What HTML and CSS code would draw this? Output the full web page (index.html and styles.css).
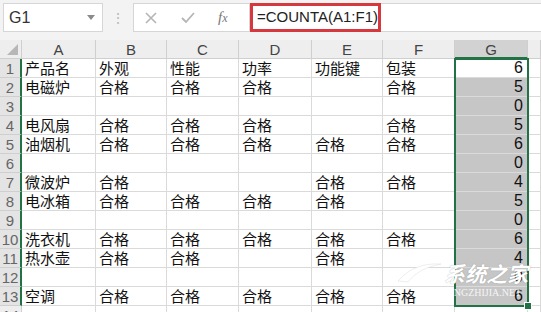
FILE: index.html
```html
<!DOCTYPE html>
<html lang="zh-CN">
<head>
  <meta charset="UTF-8" />
  <title>COUNTA</title>
  <link rel="stylesheet" href="styles.css">
</head>
<body>
  <div class="toolbar">
    <div class="name-box">
      <span>G1</span>
      <span class="caret"></span>
    </div>
    <div class="grip">⋮</div>
    <div class="formula-bar">
      <div class="fx-buttons">
        <svg width="14" height="14" viewBox="0 0 14 14"><path d="M2 2 L12 12 M12 2 L2 12" stroke="#b5b5b5" stroke-width="1.6"/></svg>
        <svg width="16" height="14" viewBox="0 0 16 14"><path d="M2 7 L6 11 L14 2" stroke="#b5b5b5" stroke-width="1.8" fill="none"/></svg>
        <span class="fx">f<i>x</i></span>
      </div>
      <div class="formula">=COUNTA(A1:F1)</div>
    </div>
  </div>

  <div class="sheet" id="sheet">
    <div class="corner"><span class="tri"></span></div>
  </div>

  <div class="watermark">
    <svg class="wm-logo" width="46" height="26" viewBox="0 0 46 26"><path d="M2 22 C13 9 28 4 45 5 C30 8 20 13 12 23 Z" fill="#fff" stroke="#ddd" stroke-width="0.5"/></svg>
    <div class="wm-text">
      <span class="wm-big">系统之家</span>
      <span class="wm-small">XITONGZHIJIA.NET</span>
    </div>
  </div>

  <script>
    const cols = ["A", "B", "C", "D", "E", "F", "G", ""];
    const rows = [
      ["产品名", "外观", "性能", "功率", "功能键", "包装", "6"],
      ["电磁炉", "合格", "合格", "合格", "", "合格", "5"],
      ["", "", "", "", "", "", "0"],
      ["电风扇", "合格", "合格", "合格", "", "合格", "5"],
      ["油烟机", "合格", "合格", "合格", "合格", "合格", "6"],
      ["", "", "", "", "", "", "0"],
      ["微波炉", "合格", "", "", "合格", "合格", "4"],
      ["电冰箱", "合格", "合格", "合格", "合格", "", "5"],
      ["", "", "", "", "", "", "0"],
      ["洗衣机", "合格", "合格", "合格", "合格", "合格", "6"],
      ["热水壶", "合格", "合格", "", "合格", "", "4"],
      ["", "", "", "", "", "", "0"],
      ["空调", "合格", "合格", "合格", "合格", "合格", "6"],
      ["", "", "", "", "", "", ""]
    ];

    const sheet = document.getElementById("sheet");

    cols.forEach(c => {
      const h = document.createElement("div");
      h.className = "col-head" + (c === "G" ? " active" : "");
      h.textContent = c;
      sheet.appendChild(h);
    });

    rows.forEach((r, i) => {
      const rh = document.createElement("div");
      rh.className = "row-head" + (i < 13 ? " active" : "");
      rh.textContent = i + 1;
      sheet.appendChild(rh);

      r.forEach((v, j) => {
        const cell = document.createElement("div");
        cell.className = "cell";
        if (j === 6) {
          cell.className += " num";
          if (i > 0 && i < 13) cell.className += " sel";
        }
        cell.textContent = v;
        sheet.appendChild(cell);
      });
      sheet.appendChild(document.createElement("div")).className = "cell";
    });

    const box = document.createElement("div");
    box.className = "selection";
    box.innerHTML = '<span class="handle"></span>';
    sheet.appendChild(box);
  </script>
</body>
</html>
```

FILE: styles.css
```css
body {
  margin: 0;
  width: 541px;
  height: 312px;
  overflow: hidden;
  background: #fff;
  font-family: "Noto Sans CJK SC", "Liberation Sans", sans-serif;
  position: relative;
}

.toolbar {
  height: 40px;
  background: #f3f3f3;
  display: flex;
  align-items: flex-start;
  padding: 3px 0 0 3px;
  box-sizing: border-box;
}

.name-box {
  flex: 0 0 100px;
  height: 29px;
  box-sizing: border-box;
  background: #fff;
  border: 1px solid #d6d6d6;
  display: flex;
  align-items: center;
  justify-content: space-between;
  padding: 0 7px 0 5px;
  font-family: "Liberation Sans", sans-serif;
  font-size: 16px;
  color: #333;
}

.caret {
  width: 0;
  height: 0;
  border-left: 4px solid transparent;
  border-right: 4px solid transparent;
  border-top: 5px solid #8a8a8a;
}

.grip {
  flex: 0 0 30px;
  text-align: center;
  color: #b8b8b8;
  font-size: 14px;
  line-height: 29px;
}

.formula-bar {
  flex: 1;
  height: 29px;
  display: flex;
  background: #fff;
  border: 1px solid #d6d6d6;
  border-right: none;
  box-sizing: border-box;
}

.fx-buttons {
  flex: 0 0 116px;
  box-sizing: border-box;
  display: flex;
  align-items: center;
  gap: 22px;
  padding-left: 10px;
  border-right: 1px solid #d6d6d6;
}

.fx {
  font-family: "Liberation Serif", serif;
  font-style: italic;
  color: #777;
  font-size: 15px;
}

.fx i {
  font-size: 12px;
}

.formula {
  height: 29px;
  margin-top: -1px;
  box-sizing: border-box;
  width: 131px;
  border: 3px solid #d6393d;
  padding-left: 4px;
  font-family: "Liberation Sans", sans-serif;
  font-size: 15px;
  line-height: 22px;
  color: #222;
}

.sheet {
  position: relative;
  display: grid;
  grid-template-columns: 22px 74px 71px 72px 73px 71px 72px 73px 1fr;
  grid-auto-rows: 19px;
  grid-template-rows: 19px;
}

.corner,
.col-head,
.row-head {
  background: #eeeeee;
  color: #444;
  box-sizing: border-box;
  border-right: 1px solid #cfcfcf;
  border-bottom: 1px solid #cfcfcf;
  font-family: "Liberation Sans", sans-serif;
}

.corner {
  position: relative;
}

.tri {
  position: absolute;
  right: 3px;
  bottom: 3px;
  width: 0;
  height: 0;
  border-left: 11px solid transparent;
  border-bottom: 11px solid #b7b7b7;
}

.col-head {
  text-align: center;
  font-size: 15px;
  line-height: 19px;
}

.col-head.active {
  background: #d2d2d2;
  border-bottom: 2px solid #217346;
}

.row-head {
  text-align: center;
  font-size: 15px;
  line-height: 19px;
  color: #666;
}

.row-head.active {
  background: #e4e4e4;
  border-right: 2px solid #217346;
}

.cell {
  box-sizing: border-box;
  border-right: 1px solid #dadada;
  border-bottom: 1px solid #dadada;
  font-size: 15px;
  line-height: 18px;
  padding-left: 3px;
  color: #111;
  white-space: nowrap;
}

.cell.num {
  text-align: right;
  padding-right: 4px;
  font-family: "Liberation Sans", sans-serif;
  font-size: 16px;
}

.cell.sel {
  background: #c6c6c6;
}

.selection {
  position: absolute;
  left: 454px;
  top: 18px;
  width: 75px;
  height: 249px;
  box-sizing: border-box;
  border: 2px solid #217346;
  pointer-events: none;
}

.handle {
  position: absolute;
  right: -5px;
  bottom: -5px;
  width: 6px;
  height: 6px;
  background: #217346;
  border: 1px solid #fff;
}

.watermark {
  position: absolute;
  left: 396px;
  top: 259px;
  width: 145px;
  display: flex;
  align-items: flex-start;
  pointer-events: none;
}

.wm-logo {
  flex: 0 0 46px;
}

.wm-text {
  flex: 0 0 auto;
  display: flex;
  flex-direction: column;
  align-items: flex-start;
  white-space: nowrap;
  margin-left: 2px;
}

.wm-big {
  color: #fff;
  font-size: 21px;
  font-weight: bold;
  font-style: italic;
  line-height: 28px;
  text-shadow: 0 0 1px rgba(0, 0, 0, 0.35);
}

.wm-small {
  font-family: "Liberation Serif", serif;
  font-size: 10px;
  line-height: 12px;
  color: rgba(255, 255, 255, 0.85);
  margin-left: -14px;
}
```
